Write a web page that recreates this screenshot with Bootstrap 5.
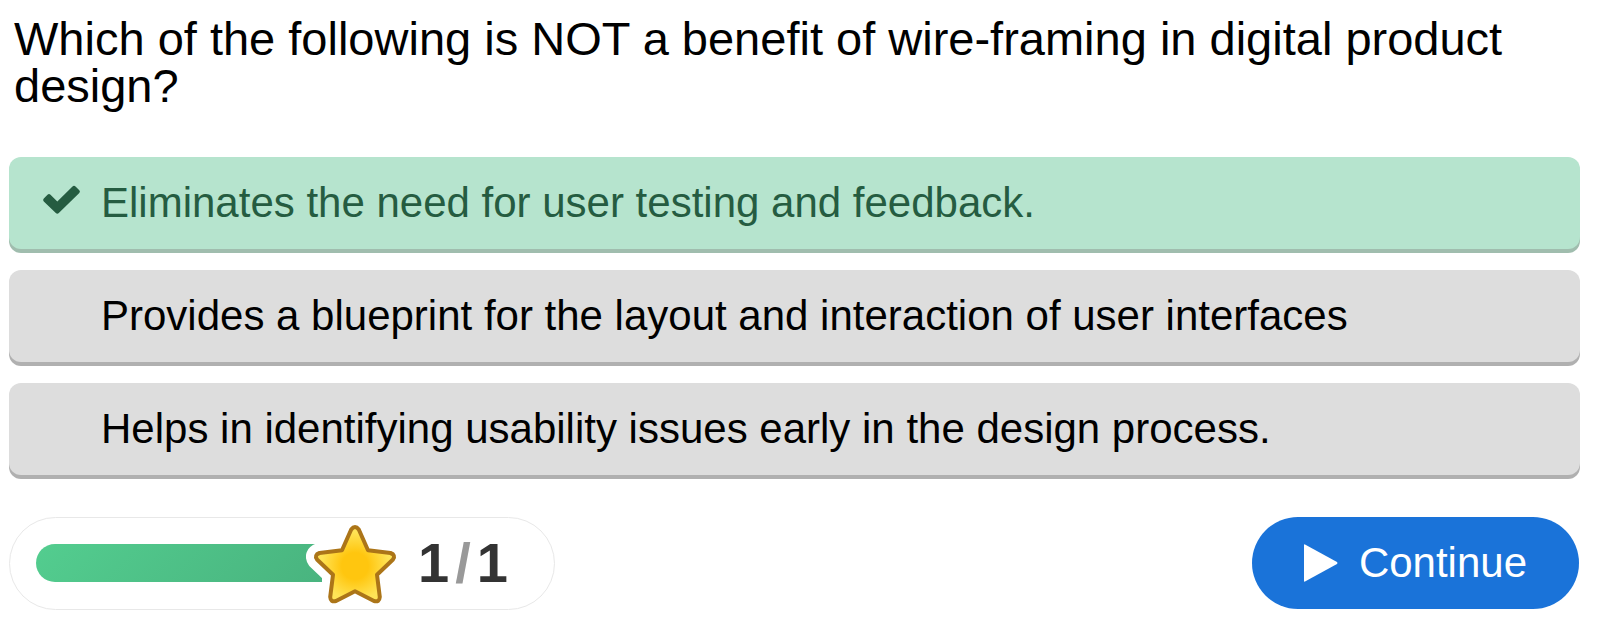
<!DOCTYPE html>
<html lang="en">
<head>
<meta charset="utf-8">
<meta name="viewport" content="width=device-width, initial-scale=1">
<title>Question</title>
<link href="https://cdn.jsdelivr.net/npm/bootstrap@5.3.0/dist/css/bootstrap.min.css" rel="stylesheet">
<style>
body { font-family: "Liberation Sans", Arial, sans-serif; color: #000; background: #fff; }
.quiz { padding: 15px 18px 16px 9px; }
.question { font-size: 47px; line-height: 47px; font-weight: 400; margin: 0 0 48px; padding: 0 5px; }
.answers { gap: 21px; margin-bottom: 42px; }
.answer { min-height: 92px; padding: 22px 32px; gap: 20px; font-size: 42px; line-height: 48px; border-radius: 12px; background: #ddd; box-shadow: 0 4px 0 #b0b0b0; }
.answer.correct { background: #b6e4ce; color: #255c41; box-shadow: 0 4px 0 #a0bdae; }
.tick { width: 40px; height: 36px; flex: none; }
.results { padding-right: 1px; }
.score { height: 93px; padding: 0 46px 1px 26px; border: 1px solid #e8e8e8; }
.bar { width: 286px; height: 38px; border-radius: 19px 0 0 19px; background: linear-gradient(135deg, #53cd8f, #49b47f); }
.star { width: 98px; height: 90px; margin-left: -16px; flex: none; overflow: hidden; }
.points { font-size: 56px; line-height: 56px; font-weight: 700; color: #333; gap: 6px; margin-left: 14px; }
.points .slash { color: #999; }
.continue { height: 92px; padding: 0 52px; gap: 21px; font-size: 42px; line-height: 48px; color: #fff; background: #1a73d9; border: 0; }
.continue:hover { color: #fff; background: #1562bb; }
</style>
</head>
<body>
<main class="quiz">
  <h1 class="question" id="question">Which of the following is NOT a benefit of wire-framing in digital product design?</h1>
  <div class="answers d-flex flex-column" role="radiogroup" aria-labelledby="question">
    <div>
      <input class="btn-check" type="radio" name="answer" id="a1" checked disabled>
      <label class="answer correct d-flex align-items-center" for="a1">
        <svg class="tick" viewBox="0 0 40 36" fill="currentColor" aria-hidden="true"><path d="M2.800 13.500 6.500 9.800Q8 8.400 9.500 9.800L16.300 16.600 31.500 1.500Q33 .200 34.500 1.500L38.300 5.300Q39.600 6.600 38.300 8L17.800 28Q16.300 29.400 14.800 28L2.800 16.500Q1.300 15 2.800 13.500Z"/></svg>
        <span>Eliminates the need for user testing and feedback.</span>
      </label>
    </div>
    <div>
      <input class="btn-check" type="radio" name="answer" id="a2" disabled>
      <label class="answer d-flex align-items-center" for="a2">
        <span class="tick"></span>
        <span>Provides a blueprint for the layout and interaction of user interfaces</span>
      </label>
    </div>
    <div>
      <input class="btn-check" type="radio" name="answer" id="a3" disabled>
      <label class="answer d-flex align-items-center" for="a3">
        <span class="tick"></span>
        <span>Helps in identifying usability issues early in the design process.</span>
      </label>
    </div>
  </div>
  <div class="results d-flex flex-wrap align-items-start justify-content-between gap-3">
    <div class="score d-flex align-items-center rounded-pill">
      <div class="bar" role="progressbar" aria-label="Score" aria-valuenow="1" aria-valuemin="0" aria-valuemax="1"></div>
      <svg class="star" viewBox="0 0 98 90" aria-hidden="true">
        <defs>
          <radialGradient id="gold" gradientUnits="userSpaceOnUse" cx="49" cy="48" r="38"><stop offset="0.35" stop-color="#ffc60f"/><stop offset="0.9" stop-color="#ffe457"/></radialGradient>
          <path id="starshape" d="M45.200 11.500Q49 6.500 52.800 11.500L62 32.300 84.500 35Q90 37 87 41.500L71 56.800 73.800 79Q73.500 84.500 68 83L49 73.200 30 83Q24.500 84.500 24.200 79L27 56.800 11 41.500Q8 37 13.500 35L36 32.300Z"/>
        </defs>
        <use href="#starshape" fill="#fff" stroke="#fff" stroke-width="20" stroke-linejoin="round"/>
        <use href="#starshape" fill="url(#gold)" stroke="#ac7518" stroke-width="4" stroke-linejoin="round"/>
      </svg>
      <div class="points d-flex"><span>1</span><span class="slash">/</span><span>1</span></div>
    </div>
    <button type="button" class="continue btn rounded-pill d-flex align-items-center">
      <svg width="34" height="38" viewBox="0 0 34 38" fill="currentColor" aria-hidden="true"><path d="M0 1Q0 0 1 .5L33 18Q34 19 33 20L1 37.500Q0 38 0 37Z"/></svg>
      <span>Continue</span>
    </button>
  </div>
</main>
<script src="https://cdn.jsdelivr.net/npm/bootstrap@5.3.0/dist/js/bootstrap.bundle.min.js"></script>
</body>
</html>
